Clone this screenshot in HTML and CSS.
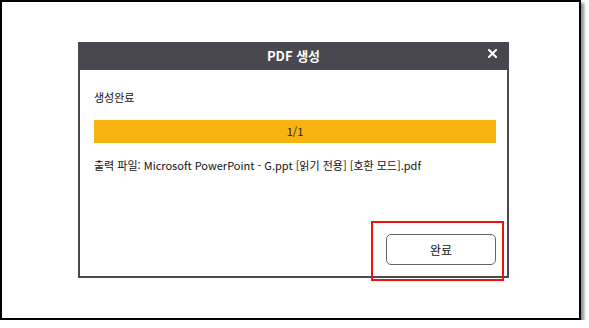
FILE: index.html
```html
<!DOCTYPE html>
<html lang="ko">
<head>
<meta charset="UTF-8">
<title>PDF 생성</title>
<link rel="stylesheet" href="styles.css">
</head>
<body>

<div class="frame">
  <div class="dialog">
    <div class="dialog__title">
      PDF 생성
      <svg class="dialog__close" width="9" height="9" viewBox="0 0 9 9">
        <path d="M1 1 L8 8 M8 1 L1 8" stroke="#fff" stroke-width="2" stroke-linecap="square"></path>
      </svg>
    </div>
    <div class="dialog__body">
      <div class="dialog__status">생성완료</div>
      <div class="progress">1/1</div>
      <div class="dialog__file">출력 파일: Microsoft PowerPoint - G.ppt [읽기 전용] [호환 모드].pdf</div>
      <div class="dialog__footer">
        <button class="btn">완료</button>
      </div>
    </div>
  </div>
  <!-- annotation box over the button -->
  <div class="highlight"></div>
</div>

</body>
</html>
```

FILE: styles.css
```css
  /* page */
  body {
    margin: 0;
    background: #fff;
    font-family: "Noto Sans CJK KR", "Noto Sans", sans-serif;
    color: #111;
  }

  .frame {
    position: relative;
    box-sizing: border-box;
    width: 581px;
    height: 320px;
    border: 2px solid #000;
    box-shadow: 3px 3px 3px rgba(0, 0, 0, 0.45);
    padding: 40px 0 0 76px;
  }

  .dialog {
    box-sizing: border-box;
    width: 431px;
    height: 236px;
    border: 2px solid #48484e;
    border-top: 0;
    display: flex;
    flex-direction: column;
  }

  .dialog__title {
    position: relative;
    height: 28px;
    margin: 0 -2px;
    background: #48484e;
    color: #fff;
    font-size: 13px;
    font-weight: bold;
    line-height: 28px;
    text-align: center;
  }

  .dialog__close {
    position: absolute;
    right: 12px;
    top: 7px;
  }

  .dialog__body {
    flex: 1;
    display: flex;
    flex-direction: column;
    padding: 0 11px 11px 14px;
    font-size: 11px;
    line-height: 16px;
  }

  .dialog__status {
    margin-top: 19px;
  }

  .progress {
    margin-top: 15px;
    height: 23px;
    line-height: 23px;
    background: #f8b310;
    text-align: center;
    color: #222;
  }

  .dialog__file {
    margin-top: 14px;
  }

  .dialog__footer {
    margin-top: auto;
    display: flex;
    justify-content: flex-end;
  }

  .btn {
    width: 110px;
    height: 31px;
    background: #fff;
    border: 1px solid #666;
    border-radius: 5px;
    font-family: inherit;
    font-size: 12px;
    color: #111;
  }

  .highlight {
    position: absolute;
    left: 369px;
    top: 219px;
    width: 129px;
    height: 56px;
    border: 2px solid #f01010;
  }
```
